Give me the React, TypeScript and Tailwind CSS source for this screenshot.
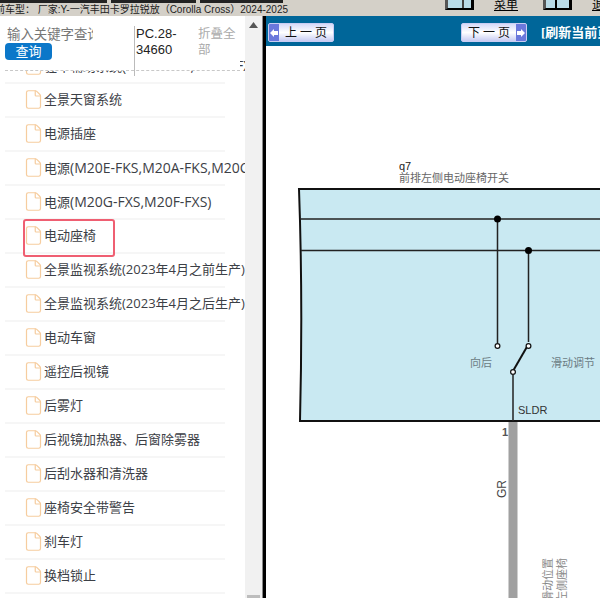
import { File } from "lucide-react";

const rows = [
  "驻车辅助系统(M20E-FKS,M20A-FXS)",
  "全景天窗系统",
  "电源插座",
  "电源(M20E-FKS,M20A-FKS,M20C-FKS)",
  "电源(M20G-FXS,M20F-FXS)",
  "电动座椅",
  "全景监视系统(2023年4月之前生产)",
  "全景监视系统(2023年4月之后生产)",
  "电动车窗",
  "遥控后视镜",
  "后雾灯",
  "后视镜加热器、后窗除雾器",
  "后刮水器和清洗器",
  "座椅安全带警告",
  "刹车灯",
  "换档锁止",
];

// model codes sit a pixel larger than the CJK in the reference
function RowLabel({ text }: { text: string }) {
  return (
    <span className="text-[13px] whitespace-nowrap text-[#3c4046]">
      {text.split(/([\x00-\x7f]+)/).map((part, i) =>
        /[A-Z]/.test(part) ? (
          <span key={i} className="text-[14px]">
            {part}
          </span>
        ) : (
          part
        )
      )}
    </span>
  );
}

function ToolIcon({ split }: { split?: boolean }) {
  return (
    <div className="h-[10px] w-[29px] shrink-0 border-x-[3px] border-b-[2px] border-r-black border-b-black border-l-[#555] bg-[#b9dbe8]">
      <div className={split ? "ml-[9px] h-full w-[2px] bg-black" : "ml-[14px] h-full w-[2px] bg-[#444]"} />
    </div>
  );
}

function PageButton({ label, dir }: { label: string; dir: "prev" | "next" }) {
  const arrow = (
    <div className="flex h-full w-[10px] shrink-0 items-center justify-center bg-[#6a78dc]">
      <svg width="8" height="8" viewBox="0 0 8 8">
        {dir === "prev" ? (
          <path d="M0 4 4 0v2h4v4H4v2z" fill="#fff" />
        ) : (
          <path d="M8 4 4 0v2H0v4h4v2z" fill="#fff" />
        )}
      </svg>
    </div>
  );
  return (
    <div className="flex h-[19px] w-[66px] shrink-0 items-center overflow-hidden rounded-[2px] border border-[#c9cdf3] bg-gradient-to-b from-[#d6daf8] via-[#ffffff] to-[#c8ccf3]">
      {dir === "prev" && arrow}
      <span className="flex-1 pl-[3px] text-center text-[12px] leading-none tracking-[3px] whitespace-nowrap text-[#111]">
        {label}
      </span>
      {dir === "next" && arrow}
    </div>
  );
}

function Diagram() {
  return (
    <svg className="block h-[552px] w-[334px] shrink-0" viewBox="266 46 334 552">
      <path d="M299 189H600V421H300Q303 300 299 189Z" fill="#c9e9f2" />
      <path d="M600 189H299Q303 300 300 421H600" fill="none" stroke="#111" strokeWidth="2" />
      <path d="M301 219H600M301 250.5H600" stroke="#222" strokeWidth="1.4" />
      <path d="M497.5 219V343M528.5 250V342M513 375V421" stroke="#222" strokeWidth="1.5" fill="none" />
      <path d="M513 371 528 345" stroke="#111" strokeWidth="2" />
      <circle cx="497.5" cy="219" r="3.5" fill="#000" />
      <circle cx="528.5" cy="250.5" r="3.5" fill="#000" />
      <circle cx="497.5" cy="346" r="2.4" fill="#fff" stroke="#111" strokeWidth="1.2" />
      <circle cx="528.5" cy="346" r="2.4" fill="#fff" stroke="#111" strokeWidth="1.2" />
      <circle cx="513" cy="372" r="2.4" fill="#fff" stroke="#111" strokeWidth="1.2" />
      <rect x="508.5" y="422" width="9" height="176" fill="#a0a0a0" />
      <text x="399" y="170" fontSize="11" fill="#222" fontFamily="Liberation Sans">q7</text>
      <text x="399" y="182" fontSize="11" fill="#666">前排左侧电动座椅开关</text>
      <text x="470" y="367" fontSize="11" fill="#6b7c84">向后</text>
      <text x="551" y="367" fontSize="11" fill="#6b7c84">滑动调节</text>
      <text x="518" y="414" fontSize="11" fill="#333" fontFamily="Liberation Sans">SLDR</text>
      <text x="502" y="436" fontSize="11" fill="#555" fontFamily="Liberation Sans" fontWeight="bold">1</text>
      <text transform="translate(506 498) rotate(-90)" fontSize="12" fill="#444" fontFamily="Liberation Sans">GR</text>
      <text transform="translate(552 558) rotate(-90)" fontSize="11" textAnchor="end" fill="#888">滑动位置</text>
      <text transform="translate(566 558) rotate(-90)" fontSize="11" textAnchor="end" fill="#888">左侧座椅</text>
    </svg>
  );
}

export default function App() {
  return (
    <div className="flex h-[598px] w-[600px] flex-col overflow-hidden bg-white font-['Open_Sans','Noto_Sans_CJK_SC',sans-serif]">
      <div className="flex h-[16px] shrink-0 overflow-hidden bg-[#d4d0c8]">
        <div className="w-[445px] shrink-0">
          <div className="flex h-[3px] gap-[4px]">
            <div className="w-[107px] bg-[#222]" />
            <div className="w-[85px] bg-[#222]" />
            <div className="w-[83px] bg-[#222]" />
          </div>
          <div className="-ml-[5px] mt-[1px] font-['Liberation_Sans','Noto_Sans_CJK_SC',sans-serif] text-[10px] leading-[12px] whitespace-nowrap text-[#222]">
            前车型： 厂家:Y-一汽丰田卡罗拉锐放（Corolla Cross）2024-2025
          </div>
        </div>
        <ToolIcon />
        <div className="ml-[20px] w-[49px] shrink-0 text-[12px] leading-[10px] text-black">
          <span className="underline">菜单</span>
        </div>
        <ToolIcon split />
        <div className="ml-[20px] text-[12px] leading-[10px] whitespace-nowrap text-black underline">退出</div>
      </div>

      <div className="flex min-h-0 flex-1">
        <div className="flex w-[245px] shrink-0 flex-col overflow-hidden">
          <div className="relative z-10 h-[55px] w-[240px] shrink-0 bg-white pl-[5px]">
            <div className="flex h-full border-b border-dashed border-[#c8c8c8] pt-[10px]">
              <div className="w-[129px] shrink-0">
                <div className="ml-[2px] w-[86px] overflow-hidden text-[13.4px] leading-[17px] whitespace-nowrap text-[#777]">
                  输入关键字查询
                </div>
                <div className="flex h-[17px] w-[47px] items-center justify-center rounded-[4px] bg-[#0b77c9] text-[13px] leading-none text-white">
                  查询
                </div>
              </div>
              <div className="h-[50px] w-[64px] shrink-0 border-l border-[#bbb] pl-[1px] font-['Liberation_Sans',sans-serif] text-[13px] leading-[16px] text-[#222]">
                PC.28-
                <br />
                34660
              </div>
              <div className="w-[38px] text-[12.5px] leading-[16px] text-[#aaa]">折叠全部</div>
            </div>
          </div>
          <div className="-mt-[21px] pl-[5px]">
            {rows.map((r) => (
              <div key={r} className="relative h-[34px] w-[220px] border-b-2 border-[#f6f6f6]">
                <div className="flex h-[31px] items-center pl-[18px]">
                  <File size={21} strokeWidth={1.4} color="#f6cd9f" className="shrink-0" />
                  <RowLabel text={r} />
                </div>
                {r === "电动座椅" && (
                  <div className="absolute top-[-1px] left-[18px] h-[38px] w-[92px] rounded-[3px] border-[2.5px] border-[#ef5f72]" />
                )}
              </div>
            ))}
          </div>
        </div>

        <div className="flex w-[17px] shrink-0 flex-col items-center justify-between bg-[#f1f1f1] pt-[6px]">
          <svg width="9" height="6" viewBox="0 0 9 6">
            <path d="M4.5 0 9 6H0z" fill="#555" />
          </svg>
          <div className="h-[3px] w-[13px] bg-[#bdbdbd]" />
        </div>
        <div className="w-[1px] shrink-0 bg-[#888]" />
        <div className="w-[3px] shrink-0 bg-black" />

        <div className="flex min-w-0 flex-1 flex-col overflow-hidden">
          <div className="flex h-[30px] shrink-0 items-start bg-[#006699] pt-[7px] pl-[2px]">
            <PageButton label="上一页" dir="prev" />
            <div className="ml-[127px] shrink-0">
              <PageButton label="下一页" dir="next" />
            </div>
            <span className="ml-[14px] shrink-0 font-['Liberation_Serif','Noto_Sans_CJK_SC',serif] text-[13px] leading-[20px] font-bold whitespace-nowrap text-white">
              [刷新当前页]
            </span>
          </div>
          <Diagram />
        </div>
      </div>
    </div>
  );
}
